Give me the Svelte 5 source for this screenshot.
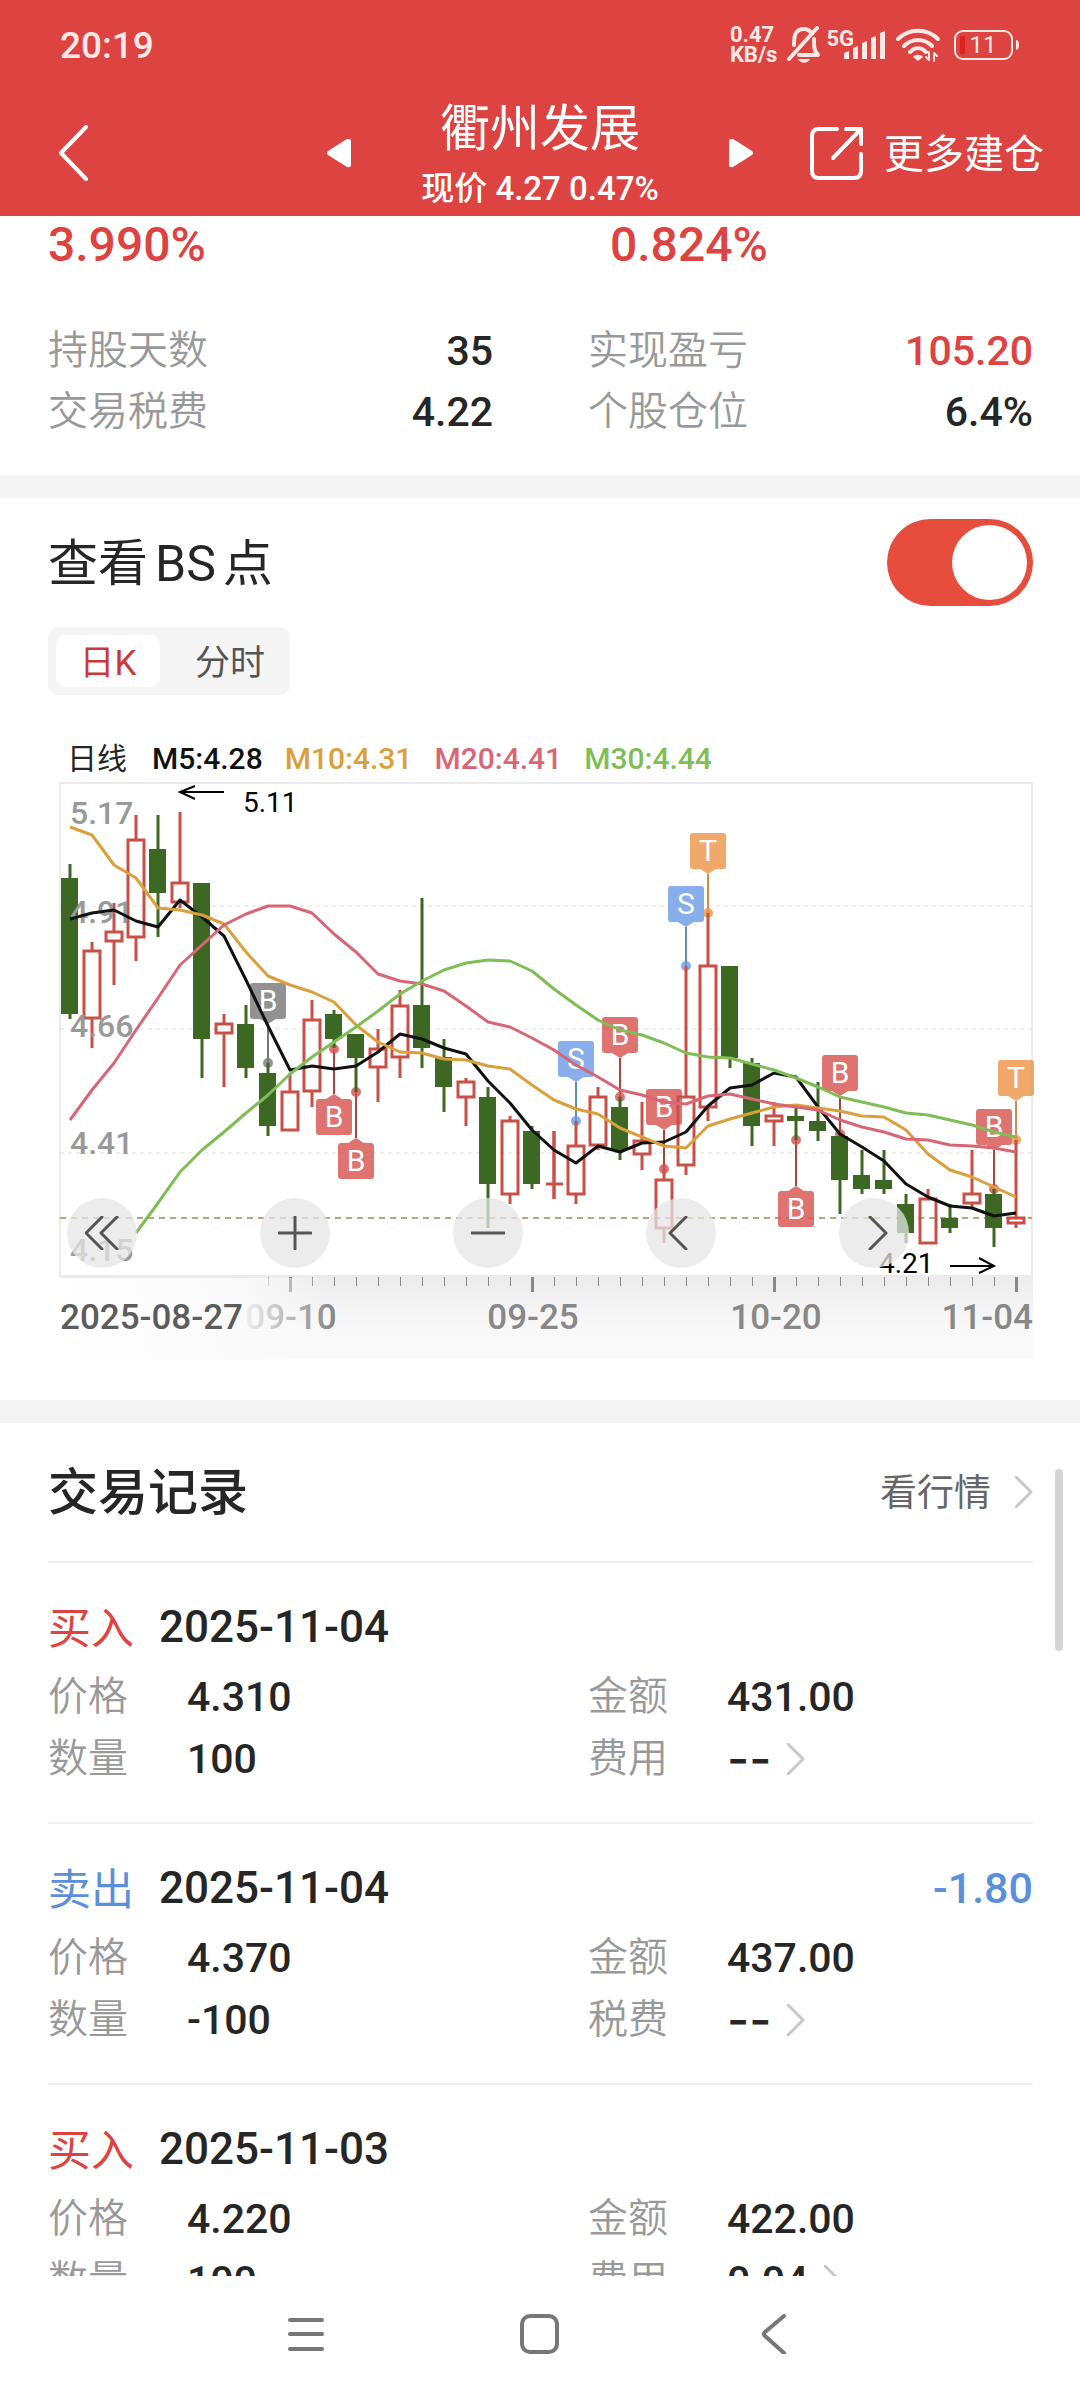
<script lang="ts">
  interface Candle {
    top: number;
    bottom: number;
    high: number;
    low: number;
    up: boolean;
  }

  interface Marker {
    index: number;
    text: string;
    tone: string;
    box: number;
    dot: number;
  }

  interface Trade {
    side: string;
    kind: string;
    date: string;
    profit?: string;
    price: string;
    amount: string;
    count: string;
    feeLabel: string;
    fee: string;
  }

  const STEP = 22;
  const BOX = 36;

  let showPoints = $state(true);
  let period = $state('day');

  // body top, body bottom, high, low, 1 = rising
  const rows = [
    [95, 231, 81, 236, 0], [167, 236, 159, 265, 1], [148, 159, 120, 202, 1], [56, 155, 32, 178, 1],
    [66, 110, 32, 154, 0], [99, 120, 29, 125, 1], [100, 256, 100, 295, 0], [240, 251, 231, 304, 1],
    [241, 285, 222, 295, 0], [290, 343, 280, 353, 0], [308, 348, 290, 348, 1], [236, 309, 217, 324, 1],
    [231, 256, 227, 265, 0], [251, 275, 251, 309, 0], [265, 285, 246, 319, 1], [222, 275, 207, 295, 1],
    [222, 265, 115, 285, 0], [274, 304, 256, 329, 0], [298, 315, 295, 343, 1], [314, 401, 304, 445, 0],
    [337, 412, 333, 421, 1], [348, 401, 343, 406, 0], [401, 401, 348, 416, 1], [362, 412, 338, 421, 1],
    [313, 363, 304, 367, 1], [324, 367, 314, 377, 0], [357, 372, 319, 387, 1], [396, 446, 386, 460, 1],
    [313, 383, 183, 392, 1], [182, 325, 130, 338, 1], [183, 275, 183, 285, 0], [280, 343, 275, 363, 0],
    [332, 339, 319, 363, 1], [333, 338, 325, 357, 0], [338, 348, 299, 358, 0], [353, 397, 351, 431, 0],
    [392, 406, 367, 411, 0], [397, 406, 367, 411, 0], [421, 450, 411, 460, 0], [415, 461, 406, 461, 1],
    [435, 445, 421, 450, 0], [410, 421, 367, 425, 1], [411, 445, 406, 464, 0], [434, 441, 357, 445, 1]
  ];

  const candles: Candle[] = rows.map(([top, bottom, high, low, up]) => ({
    top, bottom, high, low, up: up === 1
  }));

  const averages = [
    {
      name: 'M5:4.28', cls: 'm5', from: 0,
      ys: [136, 130, 127, 138, 144, 117, 134, 153, 197, 243, 287, 283, 286, 283, 269, 251, 256, 265, 271, 298, 320, 347, 367, 380, 363, 369, 360, 359, 349, 323, 305, 302, 290, 294, 324, 351, 364, 378, 401, 414, 423, 425, 433, 430]
    },
    {
      name: 'M10:4.31', cls: 'm10', from: 0,
      ys: [44, 52, 82, 95, 125, 127, 132, 141, 169, 193, 202, 209, 219, 242, 259, 269, 270, 276, 277, 283, 286, 302, 317, 326, 331, 345, 354, 363, 365, 343, 336, 330, 324, 322, 325, 328, 333, 334, 347, 371, 387, 394, 404, 414]
    },
    {
      name: 'M20:4.41', cls: 'm20', from: 0,
      ys: [337, 307, 280, 247, 215, 182, 162, 142, 131, 123, 123, 130, 151, 169, 191, 198, 201, 208, 223, 239, 244, 255, 267, 282, 294, 307, 312, 319, 321, 313, 311, 316, 321, 324, 327, 337, 344, 349, 356, 357, 362, 363, 365, 369]
    },
    {
      name: 'M30:4.44', cls: 'm30', from: 3,
      ys: [450, 420, 389, 367, 349, 330, 312, 291, 274, 259, 244, 228, 211, 198, 187, 180, 177, 178, 188, 206, 222, 237, 247, 252, 260, 270, 274, 275, 281, 287, 295, 304, 314, 319, 324, 330, 332, 337, 342, 349, 354]
    }
  ];

  const markers: Marker[] = [
    { index: 9, text: 'B', tone: 'gray', box: 200, dot: 280 },
    { index: 12, text: 'B', tone: 'red', box: 316, dot: 266 },
    { index: 13, text: 'B', tone: 'red', box: 360, dot: 309 },
    { index: 23, text: 'S', tone: 'blue', box: 258, dot: 338 },
    { index: 25, text: 'B', tone: 'red', box: 234, dot: 314 },
    { index: 27, text: 'B', tone: 'red', box: 306, dot: 386 },
    { index: 28, text: 'S', tone: 'blue', box: 103, dot: 183 },
    { index: 29, text: 'T', tone: 'orange', box: 50, dot: 130 },
    { index: 33, text: 'B', tone: 'red', box: 408, dot: 357 },
    { index: 35, text: 'B', tone: 'red', box: 272, dot: 351 },
    { index: 42, text: 'B', tone: 'red', box: 326, dot: 406 },
    { index: 43, text: 'T', tone: 'orange', box: 277, dot: 357 }
  ];

  const priceLabels = [
    { text: '5.17', y: 41 },
    { text: '4.91', y: 140 },
    { text: '4.66', y: 254 },
    { text: '4.41', y: 371 },
    { text: '4.15', y: 478 }
  ];

  const ticks = Array.from({ length: 35 }, (_, i) => i + 9);

  const trades: Trade[] = [
    { side: '买入', kind: 'buy', date: '2025-11-04', price: '4.310', amount: '431.00', count: '100', feeLabel: '费用', fee: '--' },
    { side: '卖出', kind: 'sell', date: '2025-11-04', profit: '-1.80', price: '4.370', amount: '437.00', count: '-100', feeLabel: '税费', fee: '--' },
    { side: '买入', kind: 'buy', date: '2025-11-03', price: '4.220', amount: '422.00', count: '100', feeLabel: '费用', fee: '0.04' }
  ];

  function cx(index: number): number {
    return 10 + index * STEP;
  }

  function linePoints(ys: number[], from: number): string {
    return ys.map((y, i) => `${cx(from + i)},${y}`).join(' ');
  }

  // small arrow between the flag and its stem
  function notch(m: Marker): string {
    const x = cx(m.index);
    if (m.dot > m.box) {
      const y = m.box + BOX;
      return `M${x - 8} ${y} L${x} ${y + 5} L${x + 8} ${y} Z`;
    }
    return `M${x - 8} ${m.box} L${x} ${m.box - 5} L${x + 8} ${m.box} Z`;
  }
</script>

<div class="app">
  <header class="top">
    <div class="status">
      <span class="clock">20:19</span>
      <div class="indicators">
        <div class="speed">
          <span>0.47</span>
          <span>KB/s</span>
        </div>
        <svg class="bell" viewBox="0 0 34 38" width="34" height="38">
          <path d="M25 8 C22 2 13 1 9 7 C7 10 7 14 7 19 M12 29 H31 C27 25 27 21 27 13" />
          <path d="M2 33 L30 2" />
          <path class="solid" d="M11 33 H23 C21 38 13 38 11 33 Z" />
        </svg>
        <div class="cell">
          <span class="net">5G</span>
          <svg viewBox="0 0 42 28" width="42" height="28">
            <path class="solid" d="M0 22 L5 20 V28 H0 Z M9 17 L14 15 V28 H9 Z M18 12 L23 10 V28 H18 Z M27 7 L32 5 V28 H27 Z M36 2 L41 0 V28 H36 Z" />
          </svg>
        </div>
        <svg class="wifi" viewBox="0 0 44 34" width="44" height="34">
          <path d="M2 11 C13 0 31 0 42 11 M8 18 C16 10 28 10 36 18 M14 24 C19 19 25 19 30 24" />
          <path class="solid" d="M17 29 C19 26 25 26 27 29 L22 33 Z" />
          <path class="thin" d="M33 24 V32 L30 29 M38 33 V25 L41 28" />
        </svg>
        <svg class="battery" viewBox="0 0 66 30" width="66" height="30">
          <rect x="1" y="1" width="57" height="28" rx="8" />
          <rect class="charge" x="6" y="6" width="5" height="18" />
          <path class="solid" d="M62 10 C66 10 66 20 62 20 Z" />
          <text x="29" y="23" text-anchor="middle">11</text>
        </svg>
      </div>
    </div>

    <div class="toolbar">
      <button class="back" aria-label="返回">
        <svg viewBox="0 0 30 56" width="30" height="56"><path d="M27 2 L2 28 L27 54" /></svg>
      </button>
      <div class="stock">
        <button aria-label="上一只">
          <svg viewBox="0 0 24 30" width="24" height="30"><path d="M22 1 Q24 1 24 3 V27 Q24 30 20 29 L1 17 Q-1 15 1 13 L20 1 Z" /></svg>
        </button>
        <div class="name">
          <h1>衢州发展</h1>
          <p>现价 4.27 0.47%</p>
        </div>
        <button aria-label="下一只">
          <svg viewBox="0 0 24 30" width="24" height="30"><path d="M2 1 Q0 1 0 3 V27 Q0 30 4 29 L23 17 Q25 15 23 13 L4 1 Z" /></svg>
        </button>
      </div>
      <button class="more">
        <svg viewBox="0 0 54 54" width="54" height="54">
          <path d="M27 3 H9 Q2 3 2 10 V45 Q2 52 9 52 H44 Q51 52 51 45 V28" />
          <path d="M23 32 L50 4 M36 3 H51 V18" />
        </svg>
        <span>更多建仓</span>
      </button>
    </div>
  </header>

  <main>
    <section class="stats">
      <div class="pair rates">
        <strong>3.990%</strong>
        <strong>0.824%</strong>
      </div>
      <dl class="pair">
        <div><dt>持股天数</dt><dd>35</dd></div>
        <div><dt>实现盈亏</dt><dd class="gain">105.20</dd></div>
        <div><dt>交易税费</dt><dd>4.22</dd></div>
        <div><dt>个股仓位</dt><dd>6.4%</dd></div>
      </dl>
    </section>

    <section class="points">
      <label class="switch">
        <span class="heading">查看<span>BS</span>点</span>
        <input type="checkbox" bind:checked={showPoints} />
      </label>

      <div class="tabs">
        <button class:active={period === 'day'} onclick={() => (period = 'day')}>日K</button>
        <button class:active={period === 'minute'} onclick={() => (period = 'minute')}>分时</button>
      </div>

      <div class="legend">
        <span class="unit">日线</span>
        {#each averages as avg}
          <span class={avg.cls}>{avg.name}</span>
        {/each}
      </div>

      <div class="chart">
        <svg class="kline" viewBox="0 0 973 577" width="100%">
          <defs>
            <linearGradient id="band" x1="0" y1="0" x2="0" y2="1">
              <stop offset="0" stop-color="#ececec" />
              <stop offset="0.6" stop-color="#f8f8f8" />
              <stop offset="1" stop-color="#fafafa" />
            </linearGradient>
            <linearGradient id="fade" x1="0" y1="0" x2="1" y2="0">
              <stop offset="0" stop-color="#fff" />
              <stop offset="0.66" stop-color="#fafafa" stop-opacity="0.95" />
              <stop offset="1" stop-color="#fafafa" stop-opacity="0" />
            </linearGradient>
          </defs>

          <rect x="0" y="493" width="973" height="83" fill="url(#band)" />
          <rect class="frame" x="0" y="0" width="972" height="493" />
          {#each [123, 246, 370] as y}
            <line class="grid" x1="0" x2="972" y1={y} y2={y} />
          {/each}
          <line class="last" x1="0" x2="972" y1="435" y2="435" />

          {#if showPoints}
            {#each markers as m}
              <g class={m.tone}>
                <line class="stem" x1={cx(m.index)} x2={cx(m.index)} y1={m.dot > m.box ? m.box + BOX + 5 : m.box - 5} y2={m.dot} />
                <g class="flag">
                  <circle cx={cx(m.index)} cy={m.dot} r="5" />
                  <path d={notch(m)} />
                  <rect x={cx(m.index) - 18} y={m.box} width={BOX} height={BOX} rx="3" />
                </g>
                <text class="letter" x={cx(m.index)} y={m.box + 28} text-anchor="middle">{m.text}</text>
              </g>
            {/each}
          {/if}

          {#each candles as c, i}
            {#if c.up}
              <path class="up" d="M{cx(i)} {c.high} V{c.top} M{cx(i)} {c.bottom} V{c.low}" />
              {#if c.top === c.bottom}
                <path class="up" d="M{cx(i)} {c.high} V{c.low} M{cx(i) - 8} {c.top} H{cx(i) + 9}" />
              {:else}
                <rect class="up" x={cx(i) - 8} y={c.top + 1} width="16" height={c.bottom - c.top - 2} />
              {/if}
            {:else}
              <line class="down" x1={cx(i)} x2={cx(i)} y1={c.high} y2={c.low} />
              <rect class="fall" x={cx(i) - 9} y={c.top} width="17" height={c.bottom - c.top} />
            {/if}
          {/each}

          {#each priceLabels as p}
            <text class="price" x="10" y={p.y}>{p.text}</text>
          {/each}

          {#each averages as avg}
            <polyline class="avg {avg.cls}" points={linePoints(avg.ys, avg.from)} />
          {/each}

          <path class="arrow" d="M135 3 L120 9 L135 16 M120 9 H164" />
          <text class="extreme" x="183" y="29">5.11</text>
          <path class="arrow" d="M919 475 L934 483 L919 490 M934 483 H890" />
          <text class="extreme" x="819" y="490">4.21</text>

          {#each ticks as t}
            {#if t % 11 === 10}
              <rect class="tick" x={cx(t) - 1} y="494" width="3" height="15" />
            {:else}
              <rect class="tick" x={cx(t)} y="494" width="1" height="9" />
            {/if}
          {/each}
          <text class="date" x="231" y="546" text-anchor="middle">09-10</text>
          <text class="date" x="473" y="546" text-anchor="middle">09-25</text>
          <text class="date" x="716" y="546" text-anchor="middle">10-20</text>
          <text class="date" x="973" y="546" text-anchor="end">11-04</text>
          <rect x="0" y="495" width="272" height="82" fill="url(#fade)" />
          <text class="date first" x="0" y="546">2025-08-27</text>
        </svg>

        <div class="controls">
          <button aria-label="最早"><svg viewBox="0 0 34 34"><path d="M17 1 L1 17 L17 33 M32 1 L16 17 L32 33" /></svg></button>
          <button aria-label="放大"><svg viewBox="0 0 34 34"><path d="M1 17 H33 M17 1 V33" /></svg></button>
          <button aria-label="缩小"><svg viewBox="0 0 34 34"><path d="M1 17 H33" /></svg></button>
          <button aria-label="左移"><svg viewBox="0 0 34 34"><path d="M22 1 L6 17 L22 33" /></svg></button>
          <button aria-label="右移"><svg viewBox="0 0 34 34"><path d="M13 1 L29 17 L13 33" /></svg></button>
        </div>
      </div>
    </section>

    <section class="records">
      <div class="title">
        <h2>交易记录</h2>
        <a href="#quote">
          <span>看行情</span>
          <svg class="go" viewBox="0 0 18 32" width="18" height="32"><path d="M1 1 L16 16 L1 31" /></svg>
        </a>
      </div>

      {#each trades as t}
        <article>
          <div class="trade">
            <span class="side {t.kind}">{t.side}</span>
            <time>{t.date}</time>
            {#if t.profit}
              <span class="profit">{t.profit}</span>
            {/if}
          </div>
          <dl class="pair">
            <div><dt>价格</dt><dd>{t.price}</dd></div>
            <div><dt>金额</dt><dd>{t.amount}</dd></div>
            <div><dt>数量</dt><dd>{t.count}</dd></div>
            <div>
              <dt>{t.feeLabel}</dt>
              <dd class:empty={t.fee === '--'}>{t.fee}</dd>
              <svg class="go" viewBox="0 0 18 32" width="18" height="32"><path d="M1 1 L16 16 L1 31" /></svg>
            </div>
          </dl>
        </article>
      {/each}
      <div class="scrollbar"></div>
    </section>
  </main>

  <nav>
    <button aria-label="菜单"><svg viewBox="0 0 40 40" width="40" height="40"><path d="M4 6 H36 M4 20 H36 M4 35 H36" /></svg></button>
    <button aria-label="主页"><svg viewBox="0 0 40 40" width="40" height="40"><rect x="2" y="2" width="35" height="36" rx="8" /></svg></button>
    <button aria-label="返回"><svg viewBox="0 0 40 40" width="40" height="40"><path d="M30 2 L11 18 Q9 20 11 22 L30 39" /></svg></button>
  </nav>
</div>

<style>
  :global(body) {
    margin: 0;
    background: #fff;
  }

  .app {
    display: flex;
    flex-direction: column;
    height: 100vh;
    overflow: hidden;
    background: #fff;
    color: #262626;
    font-family: Roboto, "Noto Sans CJK SC", sans-serif;
  }

  h1, h2, p, dl, dd {
    margin: 0;
    font-weight: 400;
  }

  button {
    display: flex;
    align-items: center;
    justify-content: center;
    padding: 0;
    border: 0;
    background: none;
    color: inherit;
    font: inherit;
  }

  svg {
    flex: none;
    fill: none;
    stroke-linecap: round;
    stroke-linejoin: round;
  }

  /* header */
  .top {
    background: #dd4340;
    color: #fff;
  }

  .status {
    display: flex;
    align-items: center;
    justify-content: space-between;
    height: 90px;
    padding: 0 60px;
    color: #ffe9e7;
  }

  .clock {
    font-size: 37px;
    font-weight: 500;
  }

  .indicators {
    display: flex;
    align-items: center;
    gap: 10px;
  }

  .indicators svg {
    stroke: #ffe9e7;
    stroke-width: 4;
  }

  .indicators .solid {
    fill: #ffe9e7;
    stroke: none;
  }

  .indicators .thin {
    stroke-width: 2;
  }

  .speed {
    display: flex;
    flex-direction: column;
    font-size: 22px;
    font-weight: 700;
    line-height: 20px;
  }

  .bell {
    margin-right: -5px;
  }

  .cell {
    display: flex;
    align-items: flex-end;
  }

  .net {
    align-self: flex-start;
    margin-right: -10px;
    font-size: 22px;
    font-weight: 700;
    line-height: 16px;
  }

  .indicators .battery {
    margin-left: 4px;
    stroke-width: 2;
  }

  .battery .charge {
    fill: #d9251c;
    stroke: none;
  }

  .battery text {
    fill: #ffe9e7;
    stroke: none;
    font-size: 24px;
  }

  .toolbar {
    display: grid;
    grid-template-columns: 1fr 426px 1fr;
    height: 126px;
    padding: 0 36px;
  }

  .back {
    justify-self: start;
    margin-left: 23px;
  }

  .back svg, .more svg {
    stroke: #fff;
    stroke-width: 4;
  }

  .stock {
    display: flex;
    align-items: center;
    justify-content: space-between;
  }

  .stock svg {
    fill: #fff;
  }

  .name {
    text-align: center;
  }

  .name h1 {
    font-size: 50px;
    line-height: 72px;
  }

  .name p {
    font-size: 33px;
    font-weight: 500;
    line-height: 48px;
  }

  .more {
    justify-self: end;
    gap: 20px;
    font-size: 40px;
    white-space: nowrap;
  }

  .more span {
    padding-bottom: 4px;
  }

  /* content */
  main {
    flex: 1 1 0;
    min-height: 0;
    overflow: hidden;
  }

  section {
    padding: 0 47px 0 48px;
  }

  .pair {
    display: grid;
    grid-template-columns: 1fr 1fr;
    column-gap: 95px;
  }

  .pair div {
    display: flex;
    align-items: center;
  }

  dt {
    color: #999;
    font-size: 40px;
    font-weight: 350;
    line-height: 56px;
  }

  dd {
    font-size: 41px;
    font-weight: 500;
  }

  .stats {
    padding-bottom: 33px;
    border-bottom: 23px solid #f4f4f4;
  }

  .rates {
    margin-bottom: 46px;
    color: #dd4340;
    font-size: 48px;
    line-height: 58px;
  }

  .rates strong {
    font-weight: 500;
  }

  .rates strong + strong {
    padding-left: 22px;
  }

  .stats dl div {
    justify-content: space-between;
    height: 61px;
  }

  .gain {
    color: #dd4340;
  }

  .points {
    padding-top: 21px;
    padding-bottom: 40px;
    border-bottom: 23px solid #f4f4f4;
  }

  .switch {
    display: flex;
    align-items: center;
    justify-content: space-between;
  }

  .heading {
    padding-bottom: 8px;
    font-size: 50px;
  }

  .heading span {
    margin: 0 7px;
  }

  .switch input {
    display: flex;
    appearance: none;
    box-sizing: border-box;
    width: 146px;
    height: 87px;
    margin: 0;
    padding: 6px;
    border-radius: 44px;
    background: #ccc;
  }

  .switch input::before {
    content: "";
    width: 75px;
    height: 75px;
    border-radius: 50%;
    background: #fff;
  }

  .switch input:checked {
    justify-content: flex-end;
    background: #e64d3d;
  }

  .tabs {
    display: flex;
    gap: 18px;
    width: fit-content;
    margin-top: 21px;
    padding: 8px;
    border-radius: 10px;
    background: #f5f5f5;
  }

  .tabs button {
    width: 104px;
    height: 52px;
    padding-bottom: 4px;
    border-radius: 10px;
    color: #555;
    font-size: 35px;
  }

  .tabs .active {
    background: #fff;
    color: #c93a36;
  }

  .legend {
    display: flex;
    gap: 22px;
    margin: 48px 0 8px 19px;
    font-size: 30px;
    font-weight: 500;
    line-height: 32px;
    white-space: nowrap;
  }

  .unit {
    margin-right: 3px;
    font-weight: 400;
  }

  .m5 { color: #111; stroke: #111; }
  .m10 { color: #d9a03c; stroke: #d9a03c; }
  .m20 { color: #d96675; stroke: #d96675; }
  .m30 { color: #7fbe57; stroke: #7fbe57; }

  .chart {
    position: relative;
    margin-left: 12px;
  }

  .kline {
    display: block;
    overflow: visible;
    stroke-linecap: butt;
    stroke-linejoin: miter;
  }

  .frame {
    stroke: #ebebeb;
    stroke-width: 2;
  }

  .grid {
    stroke: #dedede;
    stroke-dasharray: 4 4;
  }

  .last {
    stroke: #b3a67c;
    stroke-width: 2;
    stroke-dasharray: 6 5;
  }

  .up {
    stroke: #c94f47;
    stroke-width: 3;
  }

  .down {
    stroke: #3d6823;
    stroke-width: 3;
  }

  .fall {
    fill: #3d6823;
  }

  .avg {
    stroke-width: 3;
    stroke-linejoin: round;
  }

  .stem {
    stroke-width: 2;
  }

  .flag {
    opacity: 0.8;
  }

  .gray .flag { fill: #777; }
  .gray .stem { stroke: #777; }
  .red .flag { fill: #d6514d; }
  .red .stem { stroke: #a94440; }
  .blue .flag { fill: #6b9be8; }
  .blue .stem { stroke: #5f8db8; }
  .orange .flag { fill: #ed9447; }
  .orange .stem { stroke: #cf8d4a; }

  .letter {
    fill: #fff;
    font-size: 30px;
  }

  .price {
    fill: #999;
    font-size: 32px;
    font-weight: 500;
  }

  .arrow {
    stroke: #000;
    stroke-width: 2;
  }

  .extreme {
    fill: #000;
    font-size: 28px;
  }

  .tick {
    fill: #888;
  }

  .date {
    fill: #888;
    font-size: 35px;
    font-weight: 500;
  }

  .first {
    fill: #5c5c5c;
  }

  .controls {
    position: absolute;
    top: 415px;
    left: 7px;
    right: 124px;
    display: flex;
    justify-content: space-between;
  }

  .controls button {
    width: 70px;
    height: 70px;
    border-radius: 50%;
    background: rgba(230, 230, 230, 0.75);
  }

  .controls svg {
    width: 34px;
    height: 34px;
    stroke: #555;
    stroke-width: 3;
  }

  .records {
    position: relative;
  }

  .title {
    display: flex;
    align-items: center;
    justify-content: space-between;
    height: 138px;
  }

  .title h2 {
    padding-bottom: 8px;
    font-size: 50px;
    font-weight: 500;
  }

  .title a {
    display: flex;
    align-items: center;
    gap: 24px;
    color: #666;
    font-size: 37px;
    text-decoration: none;
  }

  .title a span {
    padding-bottom: 4px;
  }

  .go {
    stroke: #c8c8c8;
    stroke-width: 3;
  }

  article {
    padding: 40px 0 32px;
    border-top: 2px solid #f0f0f0;
  }

  .trade {
    display: flex;
    align-items: center;
    gap: 25px;
    height: 48px;
    margin-bottom: 15px;
    font-size: 43px;
  }

  .side {
    padding-bottom: 4px;
  }

  .trade time {
    font-size: 44px;
    font-weight: 500;
  }

  .buy {
    color: #dd4340;
  }

  .sell, .profit {
    color: #5b8fdc;
  }

  .profit {
    margin-left: auto;
    font-weight: 500;
  }

  .records dl div {
    height: 62px;
  }

  .records dt {
    width: 139px;
  }

  .records dd + .go {
    margin-left: 16px;
  }

  .empty {
    font-family: Inter, sans-serif;
    font-size: 48px;
    line-height: 48px;
  }

  .scrollbar {
    position: absolute;
    top: 46px;
    right: 17px;
    width: 8px;
    height: 182px;
    border-radius: 4px;
    background: #d5d5d5;
  }

  nav {
    display: flex;
    justify-content: center;
    gap: 194px;
    height: 124px;
    background: #fff;
  }

  nav button {
    height: 116px;
  }

  nav svg {
    stroke: #777;
    stroke-width: 4;
  }
</style>
